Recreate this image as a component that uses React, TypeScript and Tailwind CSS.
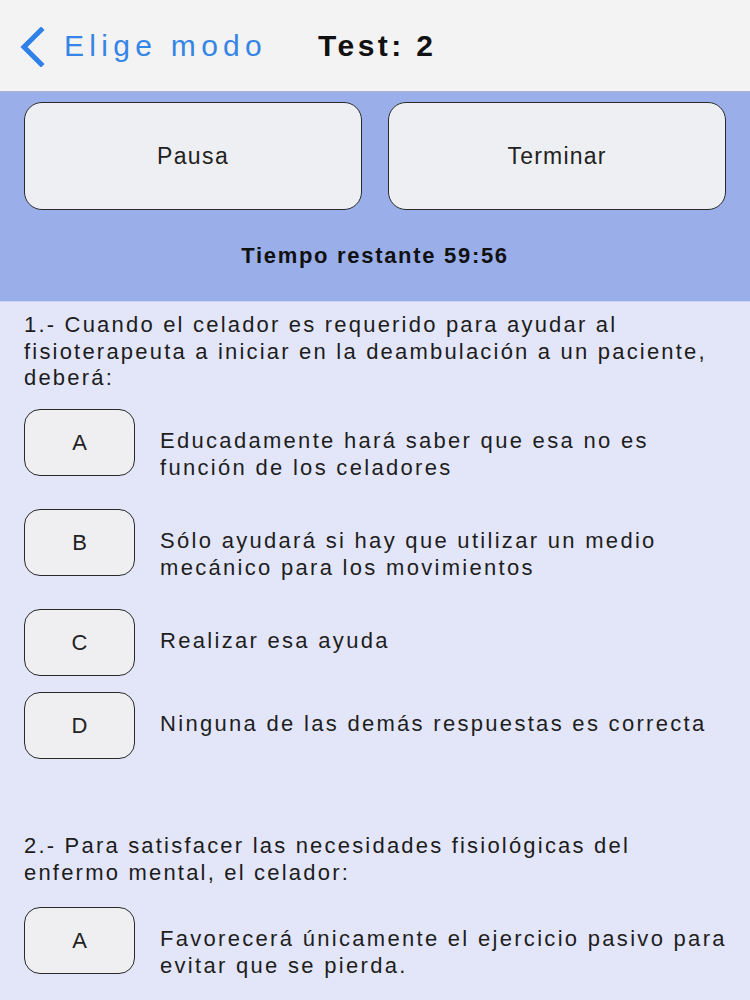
import React from "react";

const font = { fontFamily: '"Liberation Sans", Arial, sans-serif' };

function Option({ letter, text, mb }: { letter: string; text: React.ReactNode; mb: string }) {
  return (
    <div className={`flex items-start ${mb}`}>
      <div className="w-[111px] h-[67px] shrink-0 rounded-[16px] border-[1.5px] border-[#2a2a2a] bg-[#efeff2] flex items-center justify-center text-[22px] text-[#222]">
        {letter}
      </div>
      <div className="ml-[25px] pt-[18px] whitespace-nowrap text-[22px] leading-[27px] tracking-[2.3px] text-[#1e1e1e]">{text}</div>
    </div>
  );
}

export default function App() {
  return (
    <div className="w-[750px] h-[1000px] overflow-hidden bg-[#e3e6f8]" style={font}>
      {/* Nav bar */}
      <div className="h-[92px] bg-[#f3f3f4] border-b border-[#aab4d4] flex items-center">
        <svg className="ml-[19px] mt-[2px]" width="26" height="40" viewBox="0 0 26 40">
          <path d="M22 3 L5 20 L22 37" fill="none" stroke="#2f80e8" strokeWidth="5" strokeLinecap="square" />
        </svg>
        <span className="ml-[19px] text-[30px] tracking-[5.3px] text-[#3585e6]">Elige modo</span>
        <span className="ml-[51px] text-[30px] font-bold tracking-[3.4px] text-[#111]">Test: 2</span>
      </div>
      {/* Control panel */}
      <div className="h-[210px] bg-[#9aafe9] px-[24px] pt-[10px] border-b border-[#c9d3f2]">
        <div className="flex gap-[26px]">
          <div className="flex-1 h-[108px] rounded-[18px] border-[1.5px] border-[#2a2a2a] bg-[#eeeff2] flex items-center justify-center text-[23px] tracking-[1.4px] text-[#222]">
            Pausa
          </div>
          <div className="flex-1 h-[108px] rounded-[18px] border-[1.5px] border-[#2a2a2a] bg-[#eeeff2] flex items-center justify-center text-[23px] tracking-[1.2px] text-[#222]">
            Terminar
          </div>
        </div>
        <div className="mt-[29px] text-center text-[22px] font-bold tracking-[1.7px] text-[#111]">
          Tiempo restante 59:56
        </div>
      </div>
      {/* Questions */}
      <div className="px-[24px] pt-[10px]">
        <div className="text-[22px] leading-[26.5px] tracking-[2.2px] text-[#1c1c1c] mb-[17px]">
          1.- Cuando el celador es requerido para ayudar al
          <br />
          fisioterapeuta a iniciar en la deambulación a un paciente,
          <br />
          deberá:
        </div>
        <Option letter="A" text={<>Educadamente hará saber que esa no es<br />función de los celadores</>} mb="mb-[28px]" />
        <Option letter="B" text={<>Sólo ayudará si hay que utilizar un medio<br />mecánico para los movimientos</>} mb="mb-[28px]" />
        <Option letter="C" text="Realizar esa ayuda" mb="mb-[16px]" />
        <Option letter="D" text="Ninguna de las demás respuestas es correcta" mb="mb-[73px]" />
        <div className="text-[22px] leading-[27px] tracking-[2.2px] text-[#1c1c1c] mb-[21px]">
          2.- Para satisfacer las necesidades fisiológicas del
          <br />
          enfermo mental, el celador:
        </div>
        <Option letter="A" text={<>Favorecerá únicamente el ejercicio pasivo para<br />evitar que se pierda.</>} mb="mb-[20px]" />
      </div>
    </div>
  );
}
